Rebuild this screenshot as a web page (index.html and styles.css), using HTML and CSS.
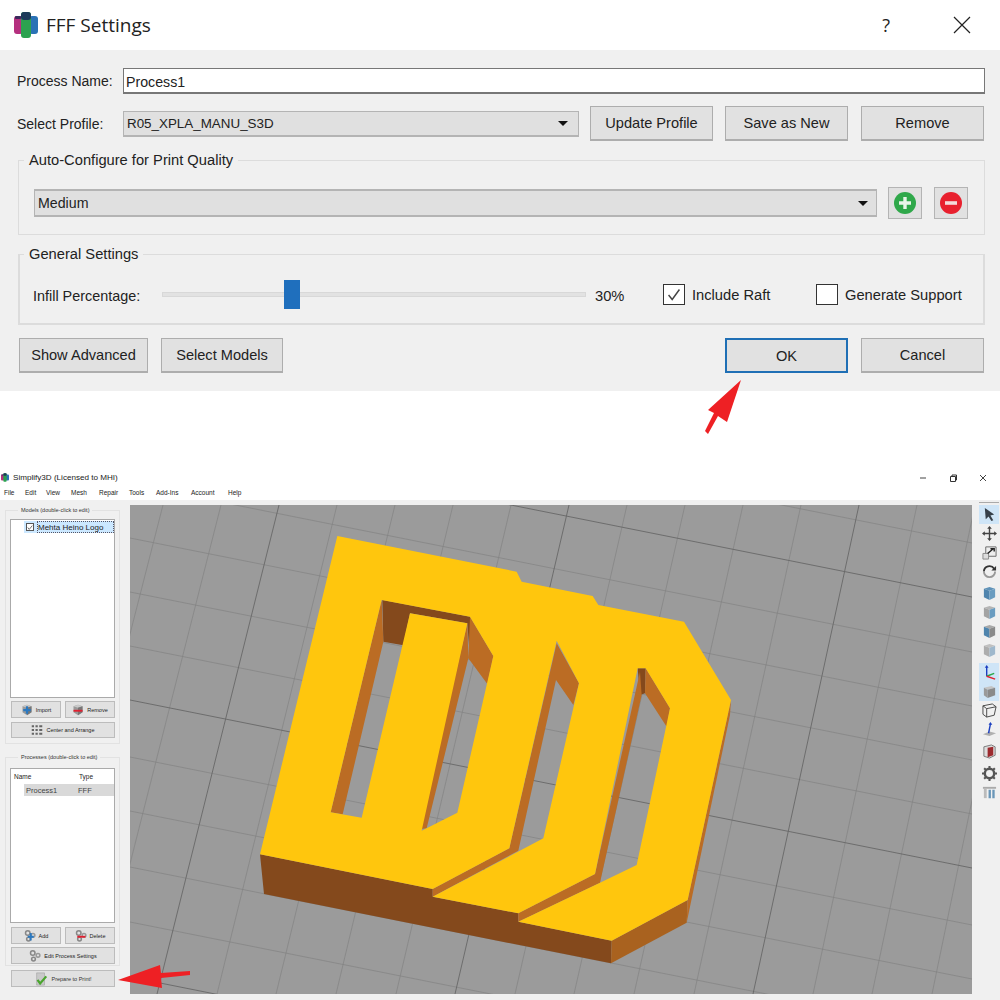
FILE: index.html
```html
<!DOCTYPE html>
<html lang="en">
<head>
  <meta charset="UTF-8" />
  <title>FFF Settings</title>
  <link rel="stylesheet" href="styles.css">
</head>
<body>
  <svg width="0" height="0" class="defs">
    <symbol id="logo" viewBox="0 0 24 26">
      <rect x="0" y="4" width="9" height="18" rx="3" fill="#b5307f"/>
      <rect x="15" y="4" width="9" height="18" rx="3" fill="#2a72b5"/>
      <rect x="7" y="0" width="10" height="26" rx="3" fill="#2ca24f"/>
      <rect x="7" y="0" width="10" height="8" rx="3" fill="#1d3a5a"/>
      <rect x="1" y="4" width="6" height="3" rx="1" fill="#3b2a5c"/>
    </symbol>
    <symbol id="box" viewBox="0 0 16 16">
      <path d="M2 3 8 1l6 2v8l-6 4-6-4z" fill="#9a9a9a"/>
      <path d="M2 3 8 1l6 2-6 2z" fill="#c9c9c9"/>
      <path d="M8 5l6-2v8l-6 4z" fill="#777"/>
    </symbol>
    <symbol id="gears" viewBox="0 0 16 16">
      <circle cx="5" cy="4" r="3" fill="none" stroke="#888" stroke-width="2"/>
      <circle cx="12" cy="7" r="2.5" fill="none" stroke="#999" stroke-width="2"/>
      <circle cx="6" cy="12" r="2.5" fill="none" stroke="#888" stroke-width="2"/>
    </symbol>
  </svg>

  <section class="dialog">
    <header class="dialog-title">
      <svg class="logo"><use href="#logo"/></svg>
      <h1>FFF Settings</h1>
      <span class="help">?</span>
      <svg class="close" viewBox="0 0 18 18"><path d="M1 1l16 16M17 1 1 17" stroke="#222" stroke-width="1.2" fill="none"/></svg>
    </header>

    <div class="dialog-body">
      <div class="row">
        <label class="row-label">Process Name:</label>
        <div class="text-input">Process1</div>
      </div>

      <div class="row profile-row">
        <label class="row-label">Select Profile:</label>
        <div class="combo profile-combo"><span>R05_XPLA_MANU_S3D</span><i class="caret"></i></div>
        <button class="btn first">Update Profile</button>
        <button class="btn">Save as New</button>
        <button class="btn last">Remove</button>
      </div>

      <fieldset class="group">
        <legend>Auto-Configure for Print Quality</legend>
        <div class="quality-row">
          <div class="combo quality-combo"><span>Medium</span><i class="caret"></i></div>
          <button class="icon-btn">
            <svg viewBox="0 0 24 24" width="24" height="24"><circle cx="12" cy="12" r="11" fill="#2fa84a"/><path d="M12 6v12M6 12h12" stroke="#e9f5ea" stroke-width="3.4"/></svg>
          </button>
          <button class="icon-btn second">
            <svg viewBox="0 0 24 24" width="24" height="24"><circle cx="12" cy="12" r="11" fill="#e8202e"/><path d="M6 12h12" stroke="#f3dada" stroke-width="3.6"/></svg>
          </button>
        </div>
      </fieldset>

      <fieldset class="group general">
        <legend>General Settings</legend>
        <div class="general-row">
          <span class="infill-label">Infill Percentage:</span>
          <div class="slider"><div class="slider-handle"></div></div>
          <span class="percent">30%</span>
          <span class="check raft-check">
            <svg viewBox="0 0 22 21" width="20" height="19"><path d="M5 11l4 5 8-11" stroke="#444" stroke-width="1.6" fill="none"/></svg>
          </span>
          <span class="check-label">Include Raft</span>
          <span class="check support-check"></span>
          <span class="check-label">Generate Support</span>
        </div>
      </fieldset>

      <div class="actions">
        <button class="btn">Show Advanced</button>
        <button class="btn select-models">Select Models</button>
        <button class="btn ok">OK</button>
        <button class="btn cancel">Cancel</button>
      </div>
    </div>
  </section>

  <section class="app">
    <div class="app-title">
      <svg class="app-logo"><use href="#logo"/></svg>
      <span>Simplify3D (Licensed to MHI)</span>
      <div class="window-btns">
        <svg viewBox="0 0 8 8" width="8" height="8"><path d="M1 4h6" stroke="#444"/></svg>
        <svg viewBox="0 0 8 8" width="8" height="8"><path d="M1.5 2.5h5v5h-5zM3 2.5V1h4.500v5H6.500" stroke="#333" fill="none"/></svg>
        <svg viewBox="0 0 8 8" width="8" height="8"><path d="M1 1l6 6M7 1 1 7" stroke="#444"/></svg>
      </div>
    </div>
    <nav class="menu">
      <span class="m-file">File</span>
      <span class="m-edit">Edit</span>
      <span class="m-view">View</span>
      <span class="m-mesh">Mesh</span>
      <span class="m-repair">Repair</span>
      <span class="m-tools">Tools</span>
      <span class="m-addins">Add-Ins</span>
      <span class="m-account">Account</span>
      <span class="m-help">Help</span>
    </nav>

    <div class="workspace">
      <aside class="side">
        <fieldset class="side-group models">
          <legend>Models (double-click to edit)</legend>
          <div class="list models-list">
            <div class="model-row">
              <span class="mini-check"><svg viewBox="0 0 8 8" width="7" height="7"><path d="M1 4l2 2.500L7 1.500" stroke="#444" fill="none"/></svg></span>
              <span class="model-name">Mehta Heino Logo</span>
            </div>
          </div>
          <div class="mini-row">
            <button class="mini-btn">
              <svg class="mini-icon" viewBox="0 0 16 16"><use href="#box"/><path d="M8 3v10M3 8h10" stroke="#2a78c0" stroke-width="3"/></svg>Import
            </button>
            <button class="mini-btn">
              <svg class="mini-icon" viewBox="0 0 16 16"><use href="#box"/><path d="M2 9h12" stroke="#e02030" stroke-width="2.500"/></svg>Remove
            </button>
          </div>
          <button class="mini-btn wide center-btn">
            <svg class="mini-icon" viewBox="0 0 16 16"><path d="M1 3h3M6 3h3M11 3h4M1 8h3M6 8h3M11 8h4M1 13h3M6 13h3M11 13h4" stroke="#666" stroke-width="2.500"/></svg>Center and Arrange
          </button>
        </fieldset>

        <fieldset class="side-group processes">
          <legend>Processes (double-click to edit)</legend>
          <div class="list processes-list">
            <div class="process-head"><span class="col-name">Name</span><span>Type</span></div>
            <div class="process-row"><span class="process-name">Process1</span><span>FFF</span></div>
          </div>
          <div class="mini-row process-btns">
            <button class="mini-btn">
              <svg class="mini-icon" viewBox="0 0 16 16"><use href="#gears"/><path d="M9 4v10M5 9h8" stroke="#2a78c0" stroke-width="2.500"/></svg>Add
            </button>
            <button class="mini-btn">
              <svg class="mini-icon" viewBox="0 0 16 16"><use href="#gears"/><path d="M3 9h11" stroke="#e02030" stroke-width="2.500"/></svg>Delete
            </button>
          </div>
          <button class="mini-btn wide edit-btn">
            <svg class="mini-icon" viewBox="0 0 16 16"><use href="#gears"/></svg>Edit Process Settings
          </button>
        </fieldset>

        <button class="mini-btn prepare">
          <svg class="mini-icon big" viewBox="0 0 16 16"><path d="M3 1h9v14H3z" fill="#c9c9c9" stroke="#999" stroke-width=".6"/><path d="M4 9l3 4 7-8" stroke="#4aa52e" stroke-width="2.600" fill="none"/></svg>Prepare to Print!
        </button>
      </aside>

      <div class="viewport">
        <svg class="scene" viewBox="130 505 842 489" width="842" height="489">
          <!-- grid -->
          <path fill="none" stroke="#838383" stroke-width=".7" d="M130 375 972 543M130 484 972 652M130 538 972 706M130 592 972 760M130 646 972 814M130 757 972 925M130 811 972 979M130 867 972 1035M130 922 972 1090M163 505 38 994M221 505 97 994M337 505 217 994M395 505 276 994M453 505 336 994M511 505 396 994M627 505 515 994M685 505 574 994M743 505 634 994M801 505 694 994M917 505 813 994M975 505 872 994M1033 505 932 994M1091 505 992 994"/>
          <path fill="none" stroke="#686868" stroke-width=".9" d="M130 429 972 597M130 700 972 868M130 977 972 1145M279 505 157 994M569 505 455 994M859 505 753 994"/>
          <!-- model, points taken from a 3x crop -->
          <g transform="translate(250 520) scale(.33333)">
            <path fill="#84491c" d="M30 1003 42 1122 1083 1330 1085 1262 805 1205 805 1180 548 1130 548 1107z"/>
            <path fill="#a9621f" d="M1085 1262 1083 1330 1310 1208 1313 1140z"/>
            <path fill="#bb6c24" d="M1443 540 1440 585 1310 1208 1313 1140z"/>
            <path fill="#84491c" d="M397 240 660 290 660 415 652 310 480 280 460 376 400 365zM1163 445 1187 445 1185 520 1170 525z"/>
            <path fill="#bb6c24" d="M395 240 400 365 278 883 242 877zM660 290 730 408 712 492 655 415zM652 310 655 415 530 925 508 928zM920 370 987 490 970 555 918 480 805 992 778 985zM778 985 805 992 548 1130 548 1107zM1170 455 1175 525 1050 1088 1035 1062zM1187 445 1260 565 1250 620 1185 520zM1035 1062 1050 1088 805 1205 805 1180z"/>
            <path fill="#ffc60d" fill-rule="evenodd" d="M262 48 800 155 815 185 1028 228 1045 255 1302 305 1443 540 1313 1140 1085 1262 805 1205 1050 1088 1160 1035 1260 565 1187 445 1163 445 1035 1062 805 1180 548 1130 880 955 987 490 920 362 778 985 548 1107 30 1003zM395 240 660 290 730 408 622 878 515 932 652 310 480 280 335 893 242 877z"/>
          </g>
        </svg>
      </div>

      <div class="tools">
        <div class="tool-group">
          <div class="tool on"><svg viewBox="0 0 16 16"><path d="M3 1l10 7-4 1 3 5-2 1-3-5-3 3z" fill="#36404a"/></svg></div>
          <div class="tool"><svg viewBox="0 0 16 16"><path d="M8 2v12M2 8h12" stroke="#444" stroke-width="1.500"/><path d="M8 0l2.500 3h-5zM8 16l2.500-3h-5zM0 8l3-2.500v5zM16 8l-3-2.500v5z" fill="#444"/></svg></div>
          <div class="tool"><svg viewBox="0 0 16 16"><path d="M4 2h11v10H4z" fill="#eee" stroke="#666"/><path d="M1 9h6v6H1z" fill="#ddd" stroke="#888"/><path d="M6 9l6-5M9 4h4v3" stroke="#222" stroke-width="1.500" fill="none"/></svg></div>
          <div class="tool"><svg viewBox="0 0 16 16"><path d="M2 8a6 6 0 0 1 11-3" stroke="#333" stroke-width="2" fill="none"/><path d="M14 8a6 6 0 0 1-12 0" stroke="#999" stroke-width="2" fill="none"/><path d="M15 2v5h-5z" fill="#333"/></svg></div>
        </div>
        <div class="tool-group">
          <div class="tool"><svg viewBox="0 0 16 16"><path d="M2 3l6-2 6 2-6 2z" fill="#5f92b8"/><path d="M2 3l6 2v10l-6-3z" fill="#4f84ad"/><path d="M8 5l6-2v9l-6 3z" fill="#6a9cc0"/></svg></div>
          <div class="tool"><svg viewBox="0 0 16 16"><path d="M2 3l6-2 6 2-6 2z" fill="#b5b5b5"/><path d="M2 3l6 2v10l-6-3z" fill="#a3a3a3"/><path d="M8 5l6-2v9l-6 3z" fill="#6a9cc0"/></svg></div>
          <div class="tool"><svg viewBox="0 0 16 16"><path d="M2 3l6-2 6 2-6 2z" fill="#a8a8a8"/><path d="M2 3l6 2v10l-6-3z" fill="#4f84ad"/><path d="M8 5l6-2v9l-6 3z" fill="#8a8a8a"/></svg></div>
          <div class="tool"><svg viewBox="0 0 16 16"><path d="M2 3l6-2 6 2-6 2z" fill="#c0c0c0"/><path d="M2 3l6 2v10l-6-3z" fill="#adadad"/><path d="M8 5l6-2v9l-6 3z" fill="#9fb8cc"/></svg></div>
        </div>
        <div class="tool-group">
          <div class="tool on"><svg viewBox="0 0 16 16"><path d="M5 12V2" stroke="#1c3fc0" stroke-width="1.500"/><path d="M5 12l8-3" stroke="#2aa84a" stroke-width="1.500"/><path d="M5 12l9 3" stroke="#e02030" stroke-width="1.500"/><path d="M5 0l2 3H3z" fill="#1c3fc0"/></svg></div>
          <div class="tool on"><svg viewBox="0 0 16 16"><path d="M2 4l8-2 4 2-8 2z" fill="#c4c4c4"/><path d="M2 4l4 2v9l-4-3z" fill="#9a9a9a"/><path d="M6 6l8-2v8l-8 3z" fill="#8a8a8a"/></svg></div>
          <div class="tool"><svg viewBox="0 0 16 16"><path d="M1 3l10-2 4 3-2 9-8 2-4-3zM1 3l4 3 10-2M5 6l0 9" stroke="#444" fill="none"/></svg></div>
          <div class="tool"><svg viewBox="0 0 16 16"><path d="M1 13l7-3 7 2-7 3z" fill="#b0b0b0"/><path d="M7 12l2-10" stroke="#1c3fc0" stroke-width="1.500"/><path d="M9 0l2 3H7z" fill="#1c3fc0"/></svg></div>
        </div>
        <div class="tool-group">
          <div class="tool"><svg viewBox="0 0 16 16"><path d="M2 3l8-2 4 2v9l-6 3-6-2z" fill="#ddd" stroke="#777"/><path d="M6 4l6-1v9l-6 2z" fill="#9c2a2e"/></svg></div>
        </div>
        <div class="tool-group">
          <div class="tool"><svg viewBox="0 0 16 16"><circle cx="8" cy="8" r="5" fill="none" stroke="#555" stroke-width="2.600"/><path d="M8 0v3M8 13v3M0 8h3M13 8h3M2.300 2.300l2 2M11.700 11.700l2 2M13.700 2.300l-2 2M4.300 11.700l-2 2" stroke="#555" stroke-width="2.200"/></svg></div>
          <div class="tool"><svg viewBox="0 0 16 16"><path d="M1 2h14v2H1z" fill="#aaa"/><path d="M2 4h3v10H2z" fill="#bbb"/><path d="M7 5h2.500v9H7zM11 5h2.500v9H11z" fill="#6a96b8"/></svg></div>
        </div>
      </div>
    </div>
  </section>

  <!-- red callout arrows drawn over the screenshot -->
  <svg class="callouts" viewBox="0 0 1000 1000" width="1000" height="1000">
    <path fill="#ee2024" d="M741 380 727 422 718 416 708 434 705 431 714 413 708 410z"/>
    <path fill="#ee2024" d="M118 980 160 965 161 973 190 971 190 975 161 978 162 988z"/>
  </svg>
</body>
</html>
```

FILE: styles.css
```css
* {
  box-sizing: border-box;
}

body {
  margin: 0;
  width: 1000px;
  height: 1000px;
  overflow: hidden;
  position: relative;
  background: white;
  color: #222;
  font-family: "Liberation Sans", sans-serif;
  font-size: 14.7px;
}

button {
  font-family: inherit;
  color: inherit;
  padding: 0;
}

.defs {
  position: absolute;
}

/* top dialog */
.dialog-title {
  height: 50px;
  display: flex;
  align-items: center;
  padding-left: 14px;
}

.logo {
  width: 24px;
  height: 26px;
}

.dialog-title h1 {
  margin: 0 0 0 8px;
  font-family: "Open Sans", sans-serif;
  font-size: 19px;
  font-weight: 400;
  flex: 1;
}

.help {
  font-family: "Open Sans", sans-serif;
  font-size: 18px;
  margin-right: 63px;
}

.close {
  width: 18px;
  height: 18px;
  margin-right: 29px;
}

.dialog-body {
  height: 341px;
  background: #f0f0f0;
  padding: 18px 15px 0 17px;
}

.row {
  display: flex;
  align-items: center;
}

.row-label {
  width: 106px;
  flex: none;
  font-size: 14px;
}

.text-input {
  flex: 1;
  height: 26px;
  line-height: 26px;
  background: white;
  border: 1px solid #777;
  border-bottom-width: 2px;
  padding-left: 2px;
  font-size: 14.2px;
}

.profile-row {
  margin-top: 12px;
  height: 35px;
}

.combo {
  height: 26px;
  background: #e0e0e0;
  border: 1px solid #b4b4b4;
  border-bottom-width: 2px;
  display: flex;
  align-items: center;
  justify-content: space-between;
  padding: 0 10px 0 3px;
}

.profile-combo {
  width: 456px;
  font-size: 13.4px;
}

.caret {
  width: 0;
  height: 0;
  border-left: 5px solid transparent;
  border-right: 5px solid transparent;
  border-top: 5px solid #111;
}

.btn {
  width: 123px;
  height: 35px;
  margin-left: 12px;
  background: #e1e1e1;
  border: 1px solid #adadad;
  border-bottom-width: 2px;
  font-size: 14.6px;
}

.btn.first {
  margin-left: 11px;
}

.btn.last {
  margin-left: 13px;
}

.group {
  margin: 10px 0 0 1px;
  padding: 18px 0 15px 15px;
  width: 967px;
  border: 1px solid #dcdcdc;
}

.group legend {
  margin-left: -10px;
  padding: 0 5px;
  line-height: 18px;
}

.quality-row {
  display: flex;
  align-items: center;
  height: 32px;
}

.quality-combo {
  width: 843px;
  height: 28px;
  border-top-width: 2px;
  padding-left: 3px;
  padding-right: 8px;
  font-size: 14.2px;
}

.icon-btn {
  width: 34px;
  height: 32px;
  margin-left: 11px;
  background: #e1e1e1;
  border: 1px solid #b4b4b4;
  display: flex;
  align-items: center;
  justify-content: center;
}

.icon-btn.second {
  margin-left: 12px;
}

.general {
  padding: 17px 0 14px 13px;
  border-width: 2px;
  border-top-width: 1px;
}

.general legend {
  margin-left: -9px;
}

.general-row {
  display: flex;
  align-items: center;
  height: 29px;
}

.infill-label {
  width: 129px;
  flex: none;
  padding-top: 3px;
  font-size: 14.4px;
}

.slider {
  width: 424px;
  height: 5px;
  background: #e2e2e2;
  border: 1px solid #d8d8d8;
  position: relative;
}

.slider-handle {
  position: absolute;
  left: 121px;
  top: -13px;
  width: 16px;
  height: 29px;
  background: #1f6fbd;
}

.percent {
  width: 68px;
  flex: none;
  margin-left: 9px;
  padding-top: 3px;
}

.check {
  width: 22px;
  height: 21px;
  background: white;
  border: 1px solid #333;
  flex: none;
  display: flex;
  align-items: center;
  justify-content: center;
}

.check-label {
  margin-left: 7px;
}

.raft-check + .check-label {
  width: 124px;
}

.actions {
  display: flex;
  margin: 13px 0 0 2px;
}

.actions .btn {
  margin-left: 0;
  width: 129px;
}

.actions .select-models {
  width: 122px;
  margin-left: 13px;
  margin-right: 442px;
}

.actions .ok {
  width: 123px;
  border: 2px solid #1f6fb5;
}

.actions .cancel {
  width: 123px;
  margin-left: 13px;
}

/* simplify3d window */
.app {
  margin-top: 79px;
  height: 530px;
}

.app-title {
  height: 15px;
  display: flex;
  align-items: center;
  font-size: 8.1px;
  padding-left: 1px;
}

.app-logo {
  width: 8px;
  height: 9px;
  margin-right: 4px;
}

.window-btns {
  margin-left: auto;
  margin-right: 13px;
  display: flex;
  gap: 22px;
}

.menu {
  height: 15px;
  display: flex;
  align-items: center;
  font-size: 6.5px;
  padding-bottom: 1px;
}

.m-file { margin-left: 4px; width: 21px; }
.m-edit { width: 21px; }
.m-view { width: 25px; }
.m-mesh { width: 28px; }
.m-repair { width: 30px; }
.m-tools { width: 27px; }
.m-addins { width: 35px; }
.m-account { width: 37px; }

.workspace {
  height: 500px;
  background: #f0f0f0;
  display: flex;
}

.side {
  width: 130px;
  flex: none;
  padding: 6px 0 0 5px;
}

.side-group {
  width: 115px;
  margin: 0;
  padding: 5px 4px 5px 5px;
  border: 1px solid #e2e2e2;
  font-size: 5.5px;
}

.side-group legend {
  margin-left: 7px;
  padding: 0 3px;
  line-height: 8px;
  color: #333;
}

.processes {
  margin-top: 9px;
  padding-top: 7px;
  padding-bottom: 1px;
}

.list {
  background: white;
  border: 1px solid #aaa;
  margin-left: -1px;
}

.models-list {
  height: 179px;
  padding-top: 1px;
}

.model-row {
  margin-left: 13px;
  height: 12px;
  background: #cce8ff;
  display: flex;
  align-items: center;
  padding-left: 2px;
  font-size: 8px;
}

.mini-check {
  width: 8px;
  height: 8px;
  background: white;
  border: 1px solid #555;
  display: flex;
  align-items: center;
  justify-content: center;
}

.model-name {
  margin-left: 3px;
  flex: 1;
  height: 12px;
  line-height: 11px;
  border: 1px dotted #556;
}

.mini-row {
  display: flex;
  justify-content: space-between;
  margin-top: 3px;
}

.mini-btn {
  width: 50px;
  height: 17px;
  background: #e1e1e1;
  border: 1px solid #bcbcbc;
  font-size: 5.5px;
  display: flex;
  align-items: center;
  justify-content: center;
}

.mini-btn.wide {
  width: 104px;
}

.center-btn {
  height: 16px;
  margin-top: 4px;
}

.edit-btn {
  margin-top: 3px;
}

.mini-icon {
  width: 12px;
  height: 12px;
  margin-right: 3px;
}

.mini-icon.big {
  width: 14px;
  height: 14px;
}

.processes-list {
  height: 155px;
}

.process-head {
  height: 15px;
  display: flex;
  align-items: center;
  font-size: 6.5px;
  padding-left: 3px;
}

.col-name {
  width: 65px;
}

.process-row {
  margin-left: 13px;
  height: 12px;
  background: #d9d9d9;
  display: flex;
  align-items: center;
  font-size: 7.5px;
  color: #444;
}

.process-name {
  margin-left: 2px;
  width: 52px;
}

.process-btns {
  margin-top: 4px;
}

.mini-btn.prepare {
  width: 104px;
  margin: 4px 0 0 6px;
  color: #333;
}

.viewport {
  width: 842px;
  height: 489px;
  margin-top: 5px;
  background: #9b9b9b;
  flex: none;
}

.scene {
  display: block;
}

.tools {
  margin: 1px 0 0 7px;
  padding-top: 4px;
  width: 20px;
  display: flex;
  flex-direction: column;
  gap: 3px;
  background: radial-gradient(circle, #aaa 0.5px, transparent 0.7px) 0 0 / 2px 3px repeat-x;
}

.tool {
  width: 20px;
  height: 19px;
  display: flex;
  align-items: center;
  justify-content: center;
}

.tool.on {
  background: #cfe5f7;
}

.tool svg {
  width: 15px;
  height: 15px;
}

.callouts {
  position: absolute;
  left: 0;
  top: 0;
  pointer-events: none;
}
```
